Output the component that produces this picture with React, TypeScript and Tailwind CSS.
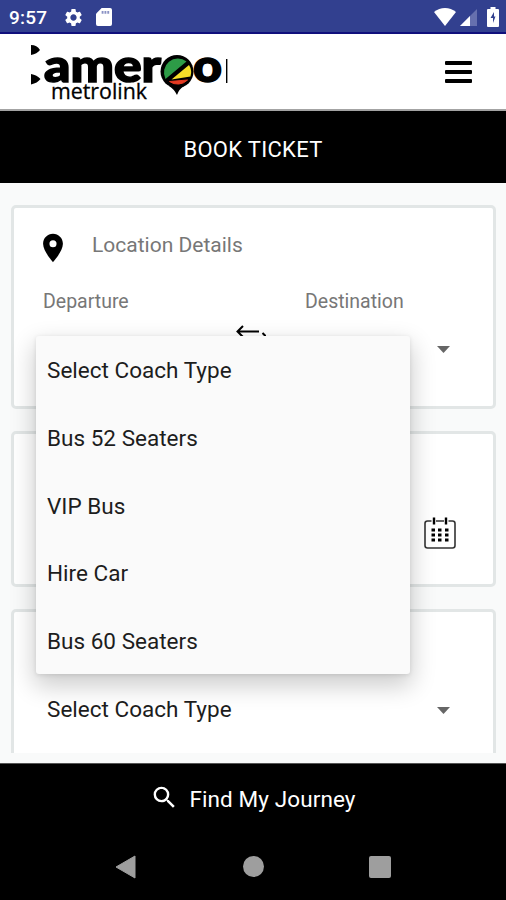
import type { ReactNode } from 'react'
import { MdLocationOn, MdSearch, MdSettings } from 'react-icons/md'

const coachTypes = ['Select Coach Type', 'Bus 52 Seaters', 'VIP Bus', 'Hire Car', 'Bus 60 Seaters']

function StatusBar() {
  return (
    <div className="flex h-[34px] shrink-0 items-center border-b-2 border-[#10107c] bg-[#32408f] pl-[9px] pr-[7px] text-white">
      <span className="w-[54px] pt-[3px] text-[19px] font-medium leading-none tracking-[0.2px]">9:57</span>
      <MdSettings className="mt-[2px] size-[21px]" />
      <svg className="ml-[12px] mt-[2px] h-[18px] w-[16px]" viewBox="0 0 17 19" fill="currentColor">
        <path d="M6 0h9a2 2 0 0 1 2 2v15a2 2 0 0 1-2 2H2a2 2 0 0 1-2-2V6z" />
        <path d="M6 3h2v3H6zM9 3h2v3H9zM12 3h2v3h-2z" fill="#8a92c4" />
      </svg>
      <div className="grow" />
      <svg className="mt-[2px] h-[18px] w-[22px]" viewBox="0 0 22 18" fill="currentColor">
        <path d="M0 4Q5 0 11 0T22 4L11 18z" />
      </svg>
      <svg className="ml-[4px] mt-[2px] h-[17px] w-[17px]" viewBox="0 0 17 17">
        <path d="M17 0v17H0z" fill="#6670ae" />
        <path d="M10 7v10H0z" fill="#fff" />
      </svg>
      <svg className="ml-[10px] mt-[2px] h-[20px] w-[12px]" viewBox="0 0 12 20">
        <path d="M3.5 0h5v2H11q1 0 1 1v16q0 1-1 1H1q-1 0-1-1V3q0-1 1-1h2.500z" fill="#fff" />
        <path d="M7 5L3.500 11h2.500v5L8.500 9.500H7z" fill="#32408f" />
      </svg>
    </div>
  )
}

function Logo() {
  return (
    <svg className="ml-[28px] h-[68px] w-[204px]" viewBox="28 38 204 68">
      <path d="M31 45q6 0 9 5-3 4-9 5zM31 74q6 1 9.500 5-3 4-9.500 5.500z" />
      <text x="44" y="82" fontFamily="Lato, sans-serif" fontWeight="900" fontSize="45" textLength="117" lengthAdjust="spacingAndGlyphs" stroke="#000" strokeWidth="1.500">
        amer
      </text>
      <text x="193" y="82" fontFamily="Lato, sans-serif" fontWeight="900" fontSize="45" textLength="29" lengthAdjust="spacingAndGlyphs" stroke="#000" strokeWidth="1.500">
        o
      </text>
      <path d="M226 59h1.400v24H226z" />
      <text x="51" y="99" fontFamily="Open Sans, sans-serif" fontSize="21.500" textLength="96" lengthAdjust="spacingAndGlyphs" stroke="#000" strokeWidth="0.3">
        metrolink
      </text>
      {/* map pin in the flag colours */}
      <path d="M169 86h15q-5 3-7 9-3-6-8-9z" />
      <circle cx="177" cy="71.500" r="16.500" />
      <path d="M165.500 79A14 14 0 0 1 186.500 61.500z" fill="#2d9b47" />
      <path d="M189 65A14 14 0 0 1 190.500 76.500L171.500 79.500z" fill="#f5df28" />
      <path d="M169.500 81.500L187.500 80A14 14 0 0 1 169.500 81.500z" fill="#e43a22" stroke="#e43a22" />
    </svg>
  )
}

function Header() {
  return (
    <header className="flex h-[77px] shrink-0 items-center justify-between border-b-2 border-[#a3a3a3] bg-white pr-[34px]">
      <Logo />
      <div className="flex flex-col gap-[5px]">
        <div className="h-[4px] w-[27px] rounded-[1px] bg-black" />
        <div className="h-[4px] w-[27px] rounded-[1px] bg-black" />
        <div className="h-[4px] w-[27px] rounded-[1px] bg-black" />
      </div>
    </header>
  )
}

function Caret() {
  return (
    <svg className="h-[7px] w-[13px]" viewBox="0 0 13 7">
      <path d="M0 0h13L6.500 7z" fill="#666" />
    </svg>
  )
}

function Card({ className, children }: { className: string; children: ReactNode }) {
  return <section className={`shrink-0 rounded-[5px] border-[3px] border-[#e2e6e6] bg-white ${className}`}>{children}</section>
}

function CoachMenu() {
  return (
    <ul className="absolute left-[36px] top-[153px] w-[374px] rounded-[3px] bg-[#fafafa] shadow-[0_10px_24px_2px_rgba(0,0,0,0.2),0_1px_4px_rgba(0,0,0,0.1)]">
      {coachTypes.map((type) => (
        <li key={type} className="flex h-[67.600px] items-center pl-[11px] pt-[3px] text-[22.500px] tracking-[0.02px] text-[#1d1d1d]">
          {type}
        </li>
      ))}
    </ul>
  )
}

function CalendarIcon() {
  return (
    <svg className="h-[32px] w-[32px]" viewBox="0 0 32 32" fill="none" stroke="#333" strokeWidth="1.600">
      <path d="M7.500 4H3.500Q1 4 1 6.500V28.500Q1 31 3.500 31H28.500Q31 31 31 28.500V6.500Q31 4 28.500 4H24.500M12 4h8" />
      <path d="M10 0.500v7M22 0.500v7" stroke="#000" strokeWidth="2.400" />
      <path d="M7.500 13h3.500M14 13h3.500M21 13h3.500M7.500 18h3.500M14 18h3.500M21 18h3.500M7.500 23h3.500M14 23h3.500M21 23h3.500" stroke="#000" strokeWidth="3" />
    </svg>
  )
}

function SwapIcon() {
  return (
    <svg className="h-[24px] w-[30px]" viewBox="0 0 30 24" fill="none" stroke="#000" strokeWidth="2">
      <path d="M7 1L1.500 6.500 7 12M1.500 6.500H23M26.500 8l5 5-5 5M30 13H8" />
    </svg>
  )
}

export default function App() {
  return (
    <div className="flex h-[900px] w-[506px] flex-col overflow-hidden bg-black font-['Roboto',sans-serif]">
      <StatusBar />
      <Header />
      <div className="flex h-[72px] shrink-0 items-center justify-center pt-[4px] text-[22px] tracking-[0.3px] text-white">
        BOOK TICKET
      </div>

      <main className="relative h-[580px] shrink-0 bg-[#f9fafa] pb-[10px] pl-[11px] pr-[10px] pt-[22px]">
        <div className="flex h-full flex-col gap-[22px] overflow-hidden">
          <Card className="h-[204px] pl-[29px] pr-[43px] text-[#777]">
            <div className="flex h-[73px] items-center pt-[3px]">
              <MdLocationOn className="-ml-[7px] mt-[4px] size-[34px] text-black" />
              <span className="ml-[22px] text-[21px]">Location Details</span>
            </div>
            <div className="flex h-[40px] items-center pt-[1px] text-[19.500px]">
              <span className="w-[262px]">Departure</span>
              <span>Destination</span>
            </div>
            <div className="flex h-[48px] items-start justify-between pl-[193px] pt-[4px]">
              <SwapIcon />
              <div className="pt-[21px]">
                <Caret />
              </div>
            </div>
          </Card>
          <Card className="flex h-[156px] items-center justify-end pr-[37px] pt-[47px]">
            <CalendarIcon />
          </Card>
          <Card className="flex h-[204px] items-start justify-between pl-[33px] pr-[43px] pt-[81px] text-[22.500px] tracking-[0.02px] text-[#1d1d1d]">
            <span>Select Coach Type</span>
            <div className="flex h-[34px] items-center">
              <Caret />
            </div>
          </Card>
        </div>
        <CoachMenu />
      </main>

      <button className="flex h-[72px] shrink-0 items-center justify-center gap-[10px] border-t border-[#555] text-[22.500px] tracking-[0.1px] text-white">
        <MdSearch className="-mt-[4px] size-[29px]" />
        Find My Journey
      </button>
      <nav className="flex h-[63px] shrink-0 items-center pl-[115px]">
        <svg className="h-[24px] w-[21px]" viewBox="0 0 21 24">
          <path d="M20 1v22L1 12z" fill="#9e9e9e" stroke="#9e9e9e" strokeLinejoin="round" />
        </svg>
        <div className="ml-[107px] size-[21px] rounded-full bg-[#9e9e9e]" />
        <div className="ml-[105px] size-[22px] rounded-[2px] bg-[#9e9e9e]" />
      </nav>
    </div>
  )
}
